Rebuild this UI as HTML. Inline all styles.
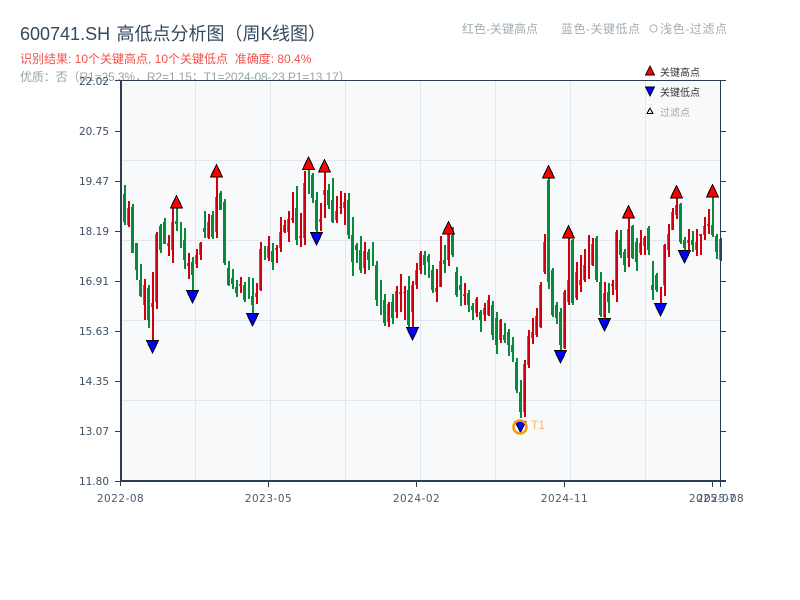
<!DOCTYPE html>
<html><head><meta charset="utf-8"><style>
html,body{margin:0;padding:0;background:#fff;width:800px;height:600px;overflow:hidden}
svg{display:block;font-family:"Liberation Sans","Noto Sans CJK SC",sans-serif}
.d{font-family:"DejaVu Sans",sans-serif}
</style></head><body>
<svg width="800" height="600" viewBox="0 0 800 600">
<text x="20" y="40" font-size="18" fill="#34495e">600741.SH <tspan x="116.500">高低点分析图（周K</tspan><tspan x="272">线图）</tspan></text>
<text x="20" y="63" font-size="12" fill="#f0534a">识别结果: 10个关键高点, 10个关键低点 &#160;准确度: 80.4%</text>
<text x="20" y="81" font-size="12" fill="#95a5a6" letter-spacing="-0.11">优质：否（R1=25.3%，R2=1.15；T1=2024-08-23 P1=13.17）</text>
<g font-size="12" fill="#a3aeb5">
<text x="462" y="33" textLength="76" lengthAdjust="spacing">红色-关键高点</text>
<text x="561" y="33" textLength="79" lengthAdjust="spacing">蓝色-关键低点</text>
<text x="660" y="33" textLength="67" lengthAdjust="spacing">浅色-过滤点</text>
</g>
<circle cx="653.500" cy="28.500" r="3.600" fill="none" stroke="#a3aeb5"/>

<rect x="120" y="81" width="600" height="400" fill="#f7f9fb"/>
<g stroke="#e3e6ec" stroke-width="1" fill="none" shape-rendering="crispEdges">
<path d="M120 160.5H720M120 240.5H720M120 320.5H720M120 400.5H720"/>
<path d="M195.5 81V480M270.5 81V480M345.5 81V480M420.5 81V480M495.5 81V480M570.5 81V480M645.5 81V480"/>
</g>

<g fill="none" shape-rendering="crispEdges">
<g stroke="#088a3b" stroke-width="2">
<path d="M124 194V222M132 207V253M136 243V270M140 280V296M148 288V320M160 226V250M164 222V244M176 221V224M184 240V260M192 262V275M204 228V232M212 215V237M220 193V210M224 202V263M228 268V285M232 278V284M236 287V293M244 285V300M252 296V305M272 251V262M296 208V240M312 175V198M316 200V230M328 190V205M332 200V222M348 200V235M352 235V262M356 245V250M360 250V270M368 252V260M376 265V300M384 300V323M392 302V318M408 290V325M424 255V265M428 256V262M432 270V290M444 260V264M452 235V255M456 272V295M460 285V290M468 293V305M472 306V310M480 312V320M492 305V335M496 318V345M504 335V340M508 332V345M512 345V352M516 362V390M520 392V412M548 180V282M552 270V315M556 305V318M560 312V345M572 240V303M596 238V280M600 282V315M608 292V302M620 240V255M624 252V265M632 226V258M636 242V262M648 228V250M652 285V290M656 275V290M680 204V242M684 240V248M692 240V245M712 225V235M716 236V252"/>
</g>
<g transform="translate(1,0)" stroke="#088a3b" stroke-width="2">
<path d="M120 151V185M124 185V225M132 204V253M136 243V280M140 264V297M148 285V328M160 224V253M164 218V244M176 207V231M180 222V248M184 228V269M192 257V290M204 211V238M212 211V239M220 191V210M224 199V265M228 261V286M232 269V289M236 280V297M244 282V302M248 277V299M252 278V313M264 246V260M272 243V270M296 186V245M308 169V194M312 173V203M316 192V232M328 184V209M332 178V223M348 193V239M352 217V276M356 243V263M360 236V273M368 249V270M372 242V266M376 261V306M380 280V315M384 294V326M392 294V324M408 276V328M424 251V275M428 254V278M432 265V293M444 245V273M452 227V257M456 267V297M460 276V306M468 290V312M472 303V320M480 310V332M492 301V340M496 312V354M504 323V343M508 329V356M512 337V362M516 358V393M520 380V418M548 178V289M552 268V317M556 302V324M560 308V350M572 239V305M596 236V282M600 272V317M608 283V313M620 230V258M624 249V272M632 225V259M636 238V271M648 226V255M652 261V300M656 273V292M680 203V244M684 237V250M692 231V252M712 197V237M716 234V259"/>
</g>
<g stroke="#ea3a42" stroke-width="2">
<path d="M128 208V225M144 285V305M152 303V307M156 234V302M168 243V246M172 222V250M188 263V266M196 255V264M200 243V255M208 222V238M216 197V232M240 284V286M256 293V297M260 249V290M268 246V258M276 248V250M280 232V248M284 225V232M288 219V232M292 218V220M300 236V238M304 183V238M320 219V222M324 190V195M336 211V220M340 207V208M344 202V208M364 251V268M388 304V322M396 291V312M400 292V294M404 292V293M412 285V312M416 270V285M420 253V270M436 288V292M440 261V287M448 234V260M464 294V296M476 299V313M484 308V315M488 300V315M500 320V340M524 364V412M528 336V365M532 332V338M536 316V335M540 285V327M544 242V272M564 292V348M568 280V302M576 272V298M580 280V285M584 265V280M592 244V265M604 293V317M612 284V286M616 232V290M628 229V258M640 243V253M644 238V246M664 245V285M668 234V250M672 212V230M676 205V215M688 240V243M696 242V250M700 234V236M704 226V235M708 224V226M720 239V260"/>
</g>
<g transform="translate(1,0)" stroke="#d0000f" stroke-width="2">
<path d="M128 201V227M144 279V320M152 272V340M156 232V309M168 235V256M172 207V263M188 253V279M196 249V268M200 242V260M208 214V239M216 177V238M240 277V293M256 283V304M260 242V291M268 236V261M276 245V263M280 217V252M284 220V233M288 211V242M292 192V223M300 213V247M304 171V245M320 203V231M324 172V218M336 196V223M340 191V214M344 193V225M364 242V274M388 302V327M396 286V318M400 274V312M404 286V320M412 281V328M416 263V289M420 251V274M436 269V302M440 236V287M448 233V266M464 283V305M476 297V317M484 303V321M488 295V316M500 319V343M524 360V417M528 330V368M532 318V344M536 308V337M540 282V328M544 234V274M564 290V349M568 238V305M576 262V300M580 255V292M584 249V282M588 235V279M592 238V266M604 282V318M612 280V295M616 230V302M628 218V267M640 230V255M644 236V255M660 287V303M664 244V296M668 224V257M672 208V230M676 197V219M688 229V250M696 229V256M700 234V255M704 217V240M708 209V234M720 238V261"/>
</g>
</g>

<g fill="#ff0000" stroke="#000" stroke-width="1" shape-rendering="crispEdges" transform="translate(0.5,0)">
<path d="M176 195.500l6 12.500h-12zM216 164.500l6 12.500h-12zM308 157l6 12.500h-12zM324 159.500l6 12.500h-12zM448 221.500l6 12.500h-12zM548 165.500l6 12.500h-12zM568 225.500l6 12.500h-12zM628 205.500l6 12.500h-12zM676 185.500l6 12.500h-12zM712 184.500l6 12.500h-12z"/>
</g>
<g fill="#0000ff" stroke="#000" stroke-width="1" shape-rendering="crispEdges" transform="translate(0.5,0)">
<path d="M146 340.500h12l-6 12.500zM186 290.500h12l-6 12.500zM246 313.500h12l-6 12.500zM310 232.500h12l-6 12.500zM406 327.500h12l-6 12.500zM554 350.500h12l-6 12.500zM598 318.500h12l-6 12.500zM654 303.500h12l-6 12.500zM678 250.500h12l-6 12.500zM514.500 421.500h11l-5.500 11z"/>
</g>
<circle cx="520" cy="427" r="6.500" fill="none" stroke="#f39c12" stroke-width="2.500"/>
<text x="531" y="429" font-size="12" fill="#f5b95f">T1</text>

<g fill="none" stroke="#2c3e50" shape-rendering="crispEdges">
<path d="M115 80.500H726M720.500 80V481" stroke-width="1"/>
<path d="M121 80V482M120 481H726" stroke-width="2"/>
<path d="M115 131.500h5M115 181.500h5M115 231.500h5M115 281.500h5M115 331.500h5M115 381.500h5M115 431.500h5M115 481.500h5"/>
<path d="M721 131.500h5M721 181.500h5M721 231.500h5M721 281.500h5M721 331.500h5M721 381.500h5M721 431.500h5M721 481.500h5"/>
<path d="M120.500 482v4M268.500 482v5M416.500 482v5M564.500 482v5M712.500 482v5M720.500 482v5"/>
</g>
<g class="d" font-size="10.500" fill="#3d4f60" text-anchor="end">
<text x="109" y="85">22.02</text>
<text x="109" y="135">20.75</text>
<text x="109" y="185">19.47</text>
<text x="109" y="235">18.19</text>
<text x="109" y="285">16.91</text>
<text x="109" y="335">15.63</text>
<text x="109" y="385">14.35</text>
<text x="109" y="435">13.07</text>
<text x="109" y="485">11.80</text>
</g>
<g class="d" font-size="10.500" fill="#4b5b6a" text-anchor="middle" letter-spacing="0.5">
<text x="120.500" y="502">2022-08</text>
<text x="268.500" y="502">2023-05</text>
<text x="416.500" y="502">2024-02</text>
<text x="564.500" y="502">2024-11</text>
<text x="712.500" y="502">2025-07</text>
<text x="720.500" y="502">2025-08</text>
</g>

<path d="M650 66l4.500 9h-9z" fill="#f00" stroke="#000" stroke-width="1" shape-rendering="crispEdges"/>
<path d="M645.500 87h9l-4.500 9z" fill="#00f" stroke="#000" stroke-width="1" shape-rendering="crispEdges"/>
<path d="M650 108l3 5.500h-6z" fill="#fdeaea" stroke="#000" stroke-width="1" shape-rendering="crispEdges"/>
<text x="660" y="76" font-size="10" fill="#333">关键高点</text>
<text x="660" y="96" font-size="10" fill="#333">关键低点</text>
<text x="660" y="116" font-size="10" fill="#aaa">过滤点</text>
</svg>
</body></html>
